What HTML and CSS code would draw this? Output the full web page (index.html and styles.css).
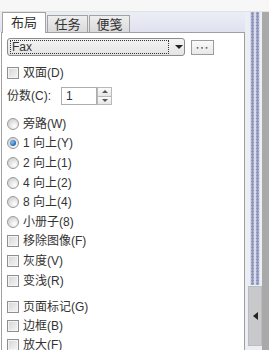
FILE: index.html
```html
<!DOCTYPE html>
<html lang="zh-CN">
<head>
    <meta charset="UTF-8">
    <title>打印选项</title>
    <link rel="stylesheet" href="styles.css">
</head>
<body>
    <div class="screen">
        <div class="topbar"></div>
        <div class="body">
            <!-- 左侧选项卡面板 -->
            <div class="main">
                <div class="tabs">
                    <div class="tab active">布局</div>
                    <div class="tab">任务</div>
                    <div class="tab">便笺</div>
                </div>
                <div class="panel">
                    <div class="printer-row">
                        <div class="combo">
                            <span class="combo-focus">Fax</span>
                            <span class="combo-arrow"></span>
                        </div>
                        <button class="more">•••</button>
                    </div>

                    <label class="row duplex"><span class="box"></span>双面(D)</label>

                    <div class="row copies">
                        <span class="copies-label">份数(C):</span>
                        <div class="spin-input">1</div>
                        <div class="spin-buttons">
                            <span class="spin-up"></span>
                            <span class="spin-down"></span>
                        </div>
                    </div>

                    <div class="group first-group">
                        <label class="row step"><span class="radio"></span>旁路(W)</label>
                        <label class="row step"><span class="radio checked"></span>1 向上(Y)</label>
                        <label class="row step"><span class="radio"></span>2 向上(1)</label>
                        <label class="row step"><span class="radio"></span>4 向上(2)</label>
                        <label class="row step"><span class="radio"></span>8 向上(4)</label>
                        <label class="row step"><span class="radio"></span>小册子(8)</label>
                        <label class="row step"><span class="box"></span>移除图像(F)</label>
                        <label class="row step"><span class="box"></span>灰度(V)</label>
                        <label class="row step"><span class="box"></span>变浅(R)</label>
                    </div>

                    <div class="group second-group">
                        <label class="row tight"><span class="box"></span>页面标记(G)</label>
                        <label class="row tight"><span class="box"></span>边框(B)</label>
                        <label class="row tight"><span class="box"></span>放大(F)</label>
                    </div>
                </div>
            </div>

            <!-- 分隔条 -->
            <div class="splitter">
                <div class="grip"></div>
                <div class="collapse"><span class="collapse-arrow"></span></div>
            </div>
            <div class="edge"></div>
        </div>
    </div>
</body>
</html>
```

FILE: styles.css
```css
body {
    margin: 0;
    font-family: "Liberation Sans", "Noto Sans CJK SC", sans-serif;
    font-size: 12px;
    color: #333333;
    background: #ffffff;
}

.screen {
    width: 269px;
    height: 350px;
    overflow: hidden;
}

.topbar {
    height: 11px;
    background: #f7f7f7;
    border-bottom: 1px solid #e2e2e2;
}

.body {
    display: flex;
    height: 338px;
}

.main {
    width: 244px;
    padding-left: 1px;
    display: flex;
    flex-direction: column;
    background: linear-gradient(#eceef6, #dfe2ee 20px, #ffffff 20px);
}

/* 选项卡 */
.tabs {
    height: 20px;
    display: flex;
    align-items: flex-end;
    padding-left: 1px;
}

.tab {
    width: 41px;
    height: 17px;
    margin-left: 1px;
    box-sizing: border-box;
    border: 1px solid #a3a3a3;
    border-bottom: none;
    background: linear-gradient(#eeeeee, #dadada);
    font-size: 13px;
    line-height: 17px;
    text-align: center;
    color: #333333;
}

.tab.active {
    width: 44px;
    height: 21px;
    margin-left: 0;
    margin-bottom: -1px;
    background: #ffffff;
    line-height: 20px;
    position: relative;
    z-index: 1;
}

.panel {
    flex: 1;
    background: #ffffff;
    border: 1px solid #a0a0a0;
    border-bottom: none;
    padding: 5px 0 0 5px;
}

/* 打印机选择 */
.printer-row {
    display: flex;
    align-items: center;
    height: 18px;
}

.combo {
    width: 178px;
    height: 18px;
    box-sizing: border-box;
    border: 1px solid #8b8b8b;
    border-radius: 3px;
    background: linear-gradient(#f4f4f4, #e4e4e4);
    display: flex;
    align-items: center;
    padding-left: 2px;
}

.combo-focus {
    width: 156px;
    height: 12px;
    border: 1px dotted #333333;
    line-height: 12px;
    padding-left: 1px;
    font-size: 12px;
    box-sizing: content-box;
}

.combo-arrow {
    margin-left: 6px;
    border-top: 4px solid #222222;
    border-left: 4px solid transparent;
    border-right: 4px solid transparent;
}

.more {
    width: 23px;
    height: 15px;
    margin: 1px 0 0 6px;
    padding: 0;
    border: 1px solid #9c9c9c;
    background: linear-gradient(#fafafa, #e8e8e8);
    font-family: "DejaVu Sans", sans-serif;
    font-size: 6px;
    letter-spacing: 1px;
    color: #555555;
    line-height: 12px;
}

/* 行 */
.row {
    display: flex;
    align-items: center;
    gap: 4px;
    height: 20px;
    line-height: 20px;
    white-space: nowrap;
}

.duplex {
    margin-top: 7px;
}

.copies {
    margin-top: 3px;
    gap: 0;
}

.copies-label {
    width: 54px;
}

.spin-input {
    width: 36px;
    height: 18px;
    box-sizing: border-box;
    border: 1px solid #abadb3;
    line-height: 16px;
    padding-left: 4px;
}

.spin-buttons {
    width: 15px;
    height: 18px;
    display: flex;
    flex-direction: column;
}

.spin-up, .spin-down {
    flex: 1;
    box-sizing: border-box;
    border: 1px solid #b9b9b9;
    background: linear-gradient(#fbfbfb, #e6e6e6);
    display: flex;
    align-items: center;
    justify-content: center;
}

.spin-down {
    border-top: none;
}

.spin-up::after {
    content: "";
    border-bottom: 3px solid #555555;
    border-left: 3px solid transparent;
    border-right: 3px solid transparent;
}

.spin-down::after {
    content: "";
    border-top: 3px solid #555555;
    border-left: 3px solid transparent;
    border-right: 3px solid transparent;
}

.first-group {
    margin-top: 8px;
}

.step {
    height: 19.6px;
}

.second-group {
    margin-top: 7px;
}

.tight {
    height: 19px;
}

/* 复选框和单选框 */
.box {
    width: 12px;
    height: 12px;
    box-sizing: border-box;
    border: 1px solid #8e8f8f;
    background: linear-gradient(135deg, #d4d4d4, #f7f7f7);
    box-shadow: inset 0 0 0 1px #f4f4f4;
    flex-shrink: 0;
}

.radio {
    width: 12px;
    height: 12px;
    box-sizing: border-box;
    border: 1px solid #999999;
    border-radius: 50%;
    background: radial-gradient(circle at 65% 70%, #ffffff, #d6d6d6 70%);
    display: flex;
    align-items: center;
    justify-content: center;
    flex-shrink: 0;
}

.radio.checked::after {
    content: "";
    width: 6px;
    height: 6px;
    border-radius: 50%;
    background: radial-gradient(circle at 35% 35%, #8cc3f2, #1f5fb0 75%);
}

/* 分隔条 */
.splitter {
    width: 17px;
    display: flex;
    flex-direction: column;
    background: #eceef6;
}

.grip {
    flex: 1;
    width: 10px;
    margin-left: 5px;
    background: radial-gradient(ellipse 2px 1.5px, #8f95b8 70%, transparent 100%) 0 0 / 5px 3px,
                #d8dcee;
}

.collapse {
    height: 58px;
    margin: 1px 0 4px 3px;
    background: #c9c9cc;
    border: 1px solid #bcbcbf;
    display: flex;
    align-items: center;
    justify-content: center;
}

.collapse-arrow {
    border-right: 5px solid #222222;
    border-top: 4px solid transparent;
    border-bottom: 4px solid transparent;
}

.edge {
    width: 7px;
    background: #a9a9a9;
}
```
